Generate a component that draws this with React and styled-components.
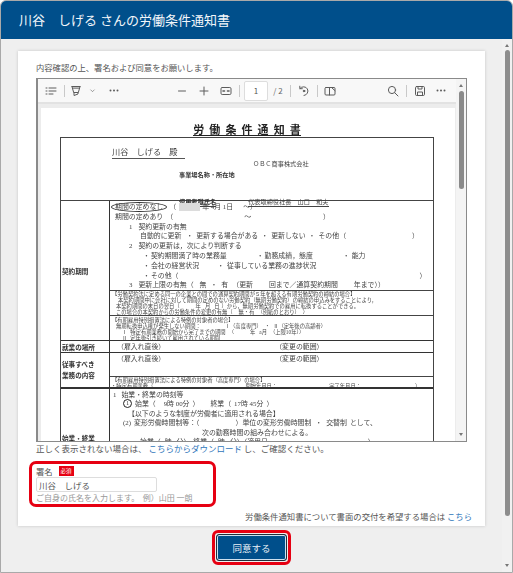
import React from "react";
import styled, { createGlobalStyle } from "styled-components";

const Global = createGlobalStyle`
  html, body { margin: 0; padding: 0; background: #fff; }
  * { box-sizing: border-box; }
  body { font-family: "Noto Sans CJK JP", "Noto Sans", sans-serif; }
`;

const Shell = styled.div`
  width: 513px; height: 573px; display: flex; flex-direction: column;
  background: #efefef; border: 1px solid #a9a9a9; border-radius: 6px 6px 0 0; overflow: hidden;
`;
const Header = styled.header`
  height: 38px; flex: none; background: #004f8b; color: #f2f6fa; font-size: 13px;
  display: flex; align-items: center; padding: 0 18px 2px; white-space: pre;
`;
const Main = styled.div`flex: 1; display: flex; min-height: 0;`;
const Content = styled.div`
  flex: 1; padding: 12px 17px 0; display: flex; flex-direction: column; align-items: center;
`;
const OuterBar = styled.div`
  width: 10px; background: #f1f1f1; display: flex; flex-direction: column; align-items: center;
  padding-top: 5px;
`;
const Arrow = styled.div`
  width: 0; height: 0; border-left: 2.5px solid transparent; border-right: 2.5px solid transparent;
  ${p => p.$down ? "border-top: 3.5px solid #777;" : "border-bottom: 3.5px solid #777;"}
  ${p => p.$down ? "margin-top: auto; margin-bottom: 5px;" : ""}
`;
const OuterThumb = styled.div`width: 5px; height: 466px; margin-top: 3px; background: #8d8d8d; border-radius: 3px;`;

const Card = styled.section`
  width: 467px; height: 475px; background: #fff; padding: 10px 18px 0; color: #555;
  box-shadow: 0 0 3px rgba(0,0,0,.18); font-size: 8.5px; display: flex; flex-direction: column;
`;
const Intro = styled.p`margin: 0 0 5px; height: 12px; line-height: 12px; font-size: 8.3px;`;
const Viewer = styled.div`
  height: 364px; flex: none; display: flex; border: 1px solid #8a8a8a; border-width: 1px 1px 1px 1px;
  box-shadow: inset 1px 0 #8a8a8a; background: #f3f3f3; overflow: hidden;
`;
const ViewerMain = styled.div`flex: 1; min-width: 0; display: flex; flex-direction: column; padding-left: 1px;`;
const Toolbar = styled.div`
  height: 25px; flex: none; display: flex; align-items: center; padding: 0 6px 0 2px;
  background: #f8f8f8; border-bottom: 2px solid #e2e2e2; color: #555;
`;
const Slot = styled.div`
  width: ${p => p.$w}px; height: 20px; flex: none; display: flex; align-items: center; justify-content: center;
  font-size: 8px; color: #666;
`;
const Sep = styled.div`
  width: 4px; flex: none; height: 12px; display: flex; justify-content: center;
  &::before { content: ""; width: 1px; background: #c9c9c9; }
`;
const Grow = styled.div`flex: 1;`;
const PageBox = styled.div`
  width: 24px; height: 20px; margin-left: 3px; flex: none; background: #fff; border: 1px solid #ddd;
  border-radius: 2px; display: flex; align-items: center; justify-content: center; font-size: 8px; color: #555;
`;
const DocArea = styled.div`flex: 1; min-height: 0; overflow: hidden; padding: 4px 4px 0 3px; background: #ececec;`;
const InnerBar = styled.div`
  width: 10px; background: #f4f4f4; display: flex; flex-direction: column; align-items: center; padding-top: 5px; flex: none;
`;
const InnerThumb = styled.div`width: 5px; height: 98px; margin-top: 4px; background: #8a8a8a; border-radius: 3px;`;

const Page = styled.div`
  width: 414px; height: 400px; background: #fff; padding: 14px 21px 0 19px;
  font-family: "Liberation Serif", "Noto Sans CJK JP", serif; color: #444; font-size: 6.9px;
  filter: blur(0.25px);
`;
const Title = styled.h1`
  margin: 0; height: 15px; line-height: 15px; font-size: 11px; font-weight: 700; text-align: center;
  color: #222; font-family: "Noto Sans CJK JP", sans-serif; letter-spacing: 0;
  & span { border-bottom: 1px solid #222; display: inline-block; line-height: 12px; word-spacing: 2.6px; }
`;
const DocTable = styled.div`border: 1px solid #444; border-bottom: 0; width: 374px;`;
const HeadRow = styled.div`
  height: 63px; border-bottom: 1px solid #444; padding: 10px 0 0 51px; display: flex; flex-direction: column;
`;
const Addressee = styled.div`
  font-size: 8.2px; line-height: 10px; width: 73px; border-bottom: 1px solid #555; white-space: pre;
`;
const HeadLine = styled.div`
  display: flex; padding-left: ${p => p.$x}px; margin-top: ${p => p.$top}px; line-height: 8px; font-size: 6.2px; white-space: pre;
`;
const BoldText = styled.span`font-family: "Noto Sans CJK JP", sans-serif; font-weight: 700; color: #333; ${p => p.$u ? "border-bottom: 1px solid #444;" : ""}`;
const USpan = styled.span`${p => p.$u ? "border-bottom: 1px solid #444;" : ""}`;
const Row = styled.div`
  display: grid; grid-template-columns: 49px 1fr; height: ${p => p.$h}px;
  border-bottom: ${p => p.$b || 1}px solid #333;
`;
const Label = styled.div`
  border-right: 1px solid #333; display: flex; flex-direction: column; justify-content: ${p => p.$top ? "flex-start" : "center"};
  padding: ${p => p.$top ? p.$top : 0}px 0 0 1px; font-family: "Noto Sans CJK JP", sans-serif; font-weight: 700;
  color: #333; font-size: 6.6px; line-height: ${p => p.$lh || 10}px;
`;
const Cell = styled.div`display: flex; flex-direction: column; min-width: 0; overflow: hidden;`;
const Block = styled.div`
  flex: ${p => p.$h ? "none" : 1}; height: ${p => p.$h ? p.$h + "px" : "auto"}; padding-top: ${p => p.$pt || 0}px;
  ${p => p.$line ? `border-top: ${p.$line}px solid #444;` : ""}
`;
const Line = styled.div`
  height: ${p => p.$lh || 9.8}px; line-height: ${p => p.$lh || 9.8}px; padding-left: ${p => p.$x || 0}px;
  white-space: nowrap; display: flex; align-items: center; font-size: ${p => p.$fs || 6.9}px;
`;
const Gap = styled.span`display: inline-block; flex: none; width: ${p => p.$w}px; height: 1px;`;
const Oval = styled.span`border: 1px solid #333; border-radius: 50%; padding: 0 3px; line-height: 8px; height: 10px; flex: none;`;
const Redact = styled.span`display: inline-block; width: 21px; height: 8px; background: #dcdcdc; flex: none;`;
const Ring = styled.span`
  width: 9px; height: 9px; border: 1px solid #222; border-radius: 50%; display: inline-flex; align-items: center;
  justify-content: center; font-size: 5.5px; flex: none; color: #222;
`;

const Note = styled.p`margin: 0; height: 13px; line-height: 13px; padding-top: 0; margin-top: 0; font-size: 8.5px; white-space: pre;`;
const Link = styled.a`color: #2f76ba; text-decoration: none; ${p => p.$center ? "" : ""}`;
const SignBox = styled.div`
  width: 187px; height: 46px; margin: 6px 0 0 -7px; border: 3px solid #e60012; border-radius: 7px; padding: 1px 0 0 4px;
`;
const SignLabel = styled.div`display: flex; align-items: center; height: 11px; font-size: 8.3px; color: #555; margin-bottom: 1px;`;
const Required = styled.span`
  margin-left: 6px; width: 15px; height: 10px; background: #e60012; color: #fff; font-size: 5.5px;
  display: flex; align-items: center; justify-content: center;
`;
const NameInput = styled.input`
  display: block; width: 121px; height: 15px; border: 1px solid #ddd; border-radius: 2px; background: #fff;
  padding: 0 2px; font: 8.5px "Noto Sans CJK JP", sans-serif; color: #555; outline: none;
`;
const Help = styled.div`font-size: 8px; color: #999; height: 11px; line-height: 11px; margin-top: 0; white-space: pre;`;
const Request = styled.div`
  margin-top: 3px; height: 12px; line-height: 12px; text-align: right; font-size: 8.35px; padding-right: 0; margin-right: -5px; white-space: pre;
`;
const ButtonHalo = styled.div`
  margin-top: 4px; width: 79px; height: 35px; border: 3px solid #e60012; border-radius: 6px; padding: 1px;
  display: flex;
`;
const Agree = styled.button`
  flex: 1; border: 1px solid #222e3a; border-radius: 3px; background: #004f8b; color: #eaf1f7;
  font: 9.5px "Noto Sans CJK JP", sans-serif; box-shadow: inset 0 0 0 1px #cfe0ee; padding: 0;
`;

const Ic = ({ children, w = 12, h = 12 }) => (
  <svg width={w} height={h} viewBox="0 0 12 12" fill="none" stroke="#5c5c5c" strokeWidth="1" strokeLinecap="round" strokeLinejoin="round">{children}</svg>
);
const Dots = () => (
  <svg width="10" height="3" viewBox="0 0 10 3" fill="#5c5c5c"><circle cx="1.5" cy="1.5" r="1" /><circle cx="5" cy="1.5" r="1" /><circle cx="8.5" cy="1.5" r="1" /></svg>
);

export default function App() {
  return (
    <Shell>
      <Global />
      <Header>川谷　しげる さんの労働条件通知書</Header>
      <Main>
        <Content>
          <Card>
            <Intro>内容確認の上、署名および同意をお願いします。</Intro>
            <Viewer>
              <ViewerMain>
                <Toolbar>
                  <Slot $w={22}><Ic><path d="M1 3h1M4 3h7M1 6h1M4 6h7M1 9h1M4 9h4" /></Ic></Slot>
                  <Sep />
                  <Slot $w={20}><Ic><path d="M2 1.5h8M2.5 3.5l1.2 4h4.6l1.2-4zM4 7.5v3l4-1.5v-1.5M2 1.5l.5 2M10 1.5l-.5 2" /></Ic></Slot>
                  <Slot $w={12}><Ic w={7} h={7}><path d="M3 5l3 3 3-3" /></Ic></Slot>
                  <Slot $w={32}><Dots /></Slot>
                  <Grow />
                  <Slot $w={22}><Ic><path d="M2.5 6h7" /></Ic></Slot>
                  <Slot $w={22}><Ic><path d="M2 6h8M6 2v8" /></Ic></Slot>
                  <Slot $w={22}><Ic><rect x="1" y="2.5" width="10" height="7" rx="1.2" /><path d="M3 6h1.5M7.5 6H9" strokeWidth="1.6" /></Ic></Slot>
                  <Sep />
                  <PageBox>1</PageBox>
                  <Slot $w={20}>/ 2</Slot>
                  <Sep />
                  <Slot $w={23}><Ic><path d="M2 3.5A4.4 4.4 0 1 1 6 10.5" /><path d="M1.8 1.2v2.5h2.5" /><circle cx="6" cy="6" r=".8" fill="#5c5c5c" /></Ic></Slot>
                  <Sep />
                  <Slot $w={22}><Ic><rect x="1" y="2.5" width="10" height="7.5" rx="1" /><path d="M5.5 2.5v7.5M7.5 2.5l3.5 3.2" /></Ic></Slot>
                  <Grow />
                  <Slot $w={22}><Ic><circle cx="5" cy="5" r="3.6" /><path d="M7.8 7.8L11 11" /></Ic></Slot>
                  <Sep />
                  <Slot $w={24}><Ic><rect x="1.5" y="1.5" width="9" height="9" rx="1.2" /><path d="M4 1.5v2.5h4V1.5M3.5 10.5V7h5v3.5" /></Ic></Slot>
                  <Slot $w={18}><Dots /></Slot>
                </Toolbar>
                <DocArea>
                  <Page>
                    <Title><span>労 働 条 件 通 知 書</span></Title>
                    <DocTable>
                      <HeadRow>
                        <Addressee>川谷　しげる　殿</Addressee>
                        <HeadLine $x={141} $top={1}>ＯＢＣ商事株式会社</HeadLine>
                        <HeadLine $x={67} $top={3}><BoldText>事業場名称・所在地</BoldText></HeadLine>
                        <HeadLine $x={67} $top={19}>
                          <BoldText $u>使用者職氏名</BoldText><Gap $w={32} />
                          <USpan $u>代表取締役社長　山口　和夫</USpan>
                        </HeadLine>
                      </HeadRow>
                      <Row $h={140} $b={1}>
                        <Label>契約期間</Label>
                        <Cell>
                          <Block $h={89} $pt={1}>
                            <Line $x={1}><Oval>期間の定めなし</Oval><Gap $w={2} />（<Gap $w={3} /><Redact /><Gap $w={2} />年 4月 1日<Gap $w={10} />〜）</Line>
                            <Line $x={5}>期間の定めあり<Gap $w={3} />（<Gap $w={71} />〜<Gap $w={72} />）</Line>
                            <Line $x={19}>1<Gap $w={6} />契約更新の有無</Line>
                            <Line $x={30}>自動的に更新<Gap $w={5} />・<Gap $w={3} />更新する場合がある<Gap $w={3} />・<Gap $w={3} />更新しない<Gap $w={3} />・<Gap $w={3} />その他（<Gap $w={66} />）</Line>
                            <Line $x={19}>2<Gap $w={6} />契約の更新は，次により判断する</Line>
                            <Line $x={33}>・<Gap $w={1} />契約期間満了時の業務量<Gap $w={30} />・<Gap $w={1} />勤務成績，態度<Gap $w={30} />・<Gap $w={2} />能力</Line>
                            <Line $x={33}>・<Gap $w={1} />会社の経営状況<Gap $w={18} />・<Gap $w={3} />従事している業務の進捗状況</Line>
                            <Line $x={33}>・<Gap $w={1} />その他（<Gap $w={241} />）</Line>
                            <Line $x={19}>3<Gap $w={6} />更新上限の有無（<Gap $w={6} />無<Gap $w={4} />・<Gap $w={4} />有<Gap $w={4} />（更新<Gap $w={16} />回まで／通算契約期間<Gap $w={16} />年まで））</Line>
                          </Block>
                          <Block $h={25} $line={1} $pt={0}>
                            <Line $x={2} $fs={5.3} $lh={6}>【労働契約法に定める同一の企業との間での通算契約期間が５年を超える有期労働契約の締結の場合】</Line>
                            <Line $x={8} $fs={5.3} $lh={6}>本契約期間中に会社に対して期間の定めのない労働契約（無期労働契約）の締結の申込みをすることにより，</Line>
                            <Line $x={6} $fs={5.3} $lh={6}>本契約期間の末日の翌日（<Gap $w={16} />年<Gap $w={4} />月<Gap $w={4} />日<Gap $w={2} />）から，無期労働契約での雇用に転換することができる。</Line>
                            <Line $x={6} $fs={5.3} $lh={6}>この場合の本契約からの労働条件の変更の有無（<Gap $w={6} />無・有<Gap $w={3} />（別紙のとおり）<Gap $w={3} />）</Line>
                          </Block>
                          <Block $line={1} $pt={1}>
                            <Line $x={2} $fs={5.3} $lh={6}>【有期雇用特別措置法による特例の対象者の場合】</Line>
                            <Line $x={6} $fs={5.3} $lh={6}>無期転換申込権が発生しない期間：<Gap $w={24} />Ⅰ（高度専門）<Gap $w={3} />・<Gap $w={3} />Ⅱ（定年後の高齢者）</Line>
                            <Line $x={12} $fs={5.3} $lh={6}>Ⅰ<Gap $w={3} />特定有期業務の開始から完了までの期間<Gap $w={3} />（<Gap $w={16} />年<Gap $w={4} />a月<Gap $w={3} />（上限10年））</Line>
                            <Line $x={12} $fs={5.3} $lh={6}>Ⅱ<Gap $w={3} />定年後引き続いて雇用されている期間</Line>
                          </Block>
                        </Cell>
                      </Row>
                      <Row $h={12} $b={1}>
                        <Label>就業の場所</Label>
                        <Cell><Line $x={7} $lh={11}>（雇入れ直後）<Gap $w={110} />（変更の範囲）</Line></Cell>
                      </Row>
                      <Row $h={36} $b={2}>
                        <Label $lh={11}><span>従事すべき</span><span>業務の内容</span></Label>
                        <Cell>
                          <Block $h={23} $pt={1}><Line $x={7} $lh={10}>（雇入れ直後）<Gap $w={110} />（変更の範囲）</Line></Block>
                          <Block $line={1}>
                            <Line $x={2} $fs={5.3} $lh={6}>【有期雇用特別措置法による特例の対象者（高度専門）の場合】</Line>
                            <Line $x={1} $fs={5.3} $lh={6}>・特定有期業務（<Gap $w={92} />開始年月日：<Gap $w={52} />完了年月日：<Gap $w={54} />）</Line>
                          </Block>
                        </Cell>
                      </Row>
                      <Row $h={120}>
                        <Label $top={44}>始業・終業</Label>
                        <Cell>
                          <Block $pt={1}>
                            <Line $x={3} $lh={9}>1<Gap $w={5} />始業・終業の時刻等</Line>
                            <Line $x={13} $lh={9.5}><Ring>1</Ring><Gap $w={3} />始業（<Gap $w={8} />9時 00分<Gap $w={3} />）<Gap $w={11} />終業（<Gap $w={3} />17時 45分<Gap $w={3} />）</Line>
                            <Line $x={18} $lh={9.5}>【以下のような制度が労働者に適用される場合】</Line>
                            <Line $x={13} $lh={10}>(2)<Gap $w={3} />変形労働時間制等：（<Gap $w={36} />）単位の変形労働時間制<Gap $w={4} />・<Gap $w={4} />交替制<Gap $w={3} />として、</Line>
                            <Line $x={92} $lh={9}>次の勤務時間の組み合わせによる。</Line>
                            <Line $x={30} $lh={9}>始業（<Gap $w={4} />時<Gap $w={5} />分）<Gap $w={3} />終業（<Gap $w={4} />時<Gap $w={5} />分）（適用日<Gap $w={100} />）</Line>
                          </Block>
                        </Cell>
                      </Row>
                    </DocTable>
                  </Page>
                </DocArea>
              </ViewerMain>
              <InnerBar>
                <Arrow />
                <InnerThumb />
                <Arrow $down />
              </InnerBar>
            </Viewer>
            <Note>正しく表示されない場合は、 <Link href="#">こちらからダウンロード</Link> し、ご確認ください。</Note>
            <SignBox>
              <SignLabel>署名<Required>必須</Required></SignLabel>
              <NameInput defaultValue="川谷　しげる" />
              <Help>ご自身の氏名を入力します。  例）山田 一朗</Help>
            </SignBox>
            <Request>労働条件通知書について書面の交付を希望する場合は <Link href="#">こちら</Link></Request>
          </Card>
          <ButtonHalo><Agree>同意する</Agree></ButtonHalo>
        </Content>
        <OuterBar>
          <Arrow />
          <OuterThumb />
          <Arrow $down />
        </OuterBar>
      </Main>
    </Shell>
  );
}
